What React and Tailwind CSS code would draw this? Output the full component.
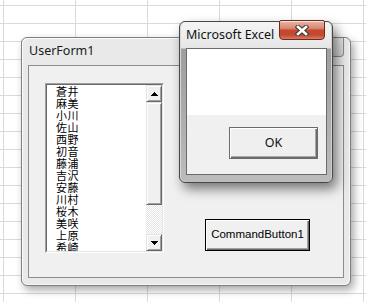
export default function App() {
  const names = ["蒼井", "麻美", "小川", "佐山", "西野", "初音", "藤浦", "吉沢", "安藤", "川村", "桜木", "美咲", "上原", "希崎"];
  const raised =
    "border border-t-[#e3e3e3] border-l-[#e3e3e3] border-b-[#696969] border-r-[#696969] shadow-[inset_1px_1px_0_#ffffff,inset_-1px_-1px_0_#a0a0a0] bg-[#f0f0f0]";
  return (
    <div className="relative w-[366px] h-[302px] overflow-hidden bg-white bg-[image:linear-gradient(to_right,#dadada_1px,transparent_1px),linear-gradient(to_bottom,#dadada_1px,transparent_1px)] bg-size-[72px_18px] bg-position-[3px_5px]">
      {/* UserForm window */}
      <div className="absolute left-[21px] top-[37px] w-[330px] h-[249px] rounded-[6px] border border-[#7f7f7f] bg-[#e9e9e9] shadow-[inset_1px_1px_0_#fbfbfb,inset_-1px_-1px_0_#f6f6f6,3px_4px_9px_rgba(0,0,0,0.35)] flex flex-col">
        <div className="h-[27px] shrink-0 flex items-center pl-[7px] text-[12.5px] text-[#1a1a1a] font-['Noto_Sans',sans-serif]">
          UserForm1
        </div>
        <div className="mx-[6px] h-[213px] border border-[#8c8c8c] bg-[#f0f0f0] flex items-start pl-[16px] pt-[17px]">
          {/* ListBox */}
          <div className="w-[119px] h-[170px] shrink-0 border border-t-[#a0a0a0] border-l-[#a0a0a0] border-b-white border-r-white">
            <div className="h-full border border-t-[#696969] border-l-[#696969] border-b-[#e3e3e3] border-r-[#e3e3e3] bg-white flex">
              <div className="flex-1 overflow-hidden pl-[9px] font-['Noto_Sans_CJK_JP',sans-serif] text-[11px] leading-[12px] text-black">
                {names.map((n) => (
                  <div key={n} className="h-[12px] tracking-[0.5px]">{n}</div>
                ))}
              </div>
              <div className="w-[16px] shrink-0 flex flex-col">
                <div className={`h-[17px] shrink-0 flex items-center justify-center ${raised}`}>
                  <svg width="7" height="4" shapeRendering="crispEdges">
                    <polygon points="0,4 7,4 3.5,0" fill="#000" />
                  </svg>
                </div>
                <div className={`h-[103px] shrink-0 ${raised}`} />
                <div className="flex-1 bg-[image:repeating-conic-gradient(#ffffff_0_25%,#e4e4e4_0_50%)] bg-size-[2px_2px]" />
                <div className={`h-[17px] shrink-0 flex items-center justify-center ${raised}`}>
                  <svg width="7" height="4" shapeRendering="crispEdges">
                    <polygon points="0,0 7,0 3.5,4" fill="#000" />
                  </svg>
                </div>
              </div>
            </div>
          </div>
          {/* CommandButton1 */}
          <div className="ml-[41px] mt-[136px] w-[105px] h-[32px] shrink-0 border border-black bg-[#f0f0f0] shadow-[inset_1px_1px_0_#ffffff,inset_-1px_-1px_0_#696969,inset_-2px_-2px_0_#a0a0a0] flex items-center justify-center font-['Liberation_Sans',sans-serif] text-[11.5px] text-black">
            CommandButton1
          </div>
        </div>
        {/* inactive close button (mostly hidden) */}
        <div className="absolute right-[6px] top-0 w-[44px] h-[19px] rounded-b-[4px] border border-t-0 border-[#8a8a8a] bg-[linear-gradient(to_bottom,#e6e6e6,#d2d2d2)]" />
      </div>

      {/* Microsoft Excel message box */}
      <div className="absolute left-[179px] top-[21px] w-[154px] h-[162px] rounded-[6px] border border-[#474747] bg-[linear-gradient(to_bottom,#f4f4f4_0px,#e6e6e6_26px,#9f9f9f_27px,#a5a5a5_60px,#bcbcbc_100%)] shadow-[inset_1px_0_0_#d8d8d8,inset_-1px_0_0_#d0d0d0,4px_6px_12px_rgba(0,0,0,0.5)] flex flex-col">
        <div className="h-[26px] shrink-0 flex items-center pl-[6px] text-[12.5px] text-[#111] font-['Noto_Sans',sans-serif]">
          Microsoft Excel
        </div>
        <div className="ml-[6px] mr-[5px] h-[127px] shrink-0 border border-[#6b6b6b] flex flex-col">
          <div className="h-[66px] shrink-0 bg-white" />
          <div className="flex-1 bg-[#f0f0f0] flex justify-end items-start pt-[12px] pr-[8px]">
            <div className="w-[89px] h-[32px] border border-[#6b6b6b] bg-[#efefef] shadow-[inset_1px_1px_0_#ffffff,inset_-1px_-1px_0_#6b6b6b,inset_-2px_-2px_0_#a8a8a8] flex items-center justify-center font-['Noto_Sans',sans-serif] text-[12.5px] text-[#111]">
              OK
            </div>
          </div>
        </div>
        {/* close button */}
        <div className="absolute left-[99px] top-[-2px] w-[46px] h-[20px] rounded-b-[4px] rounded-t-[2px] border border-[#6b2c20] bg-[linear-gradient(to_bottom,#e9b4a4_0%,#d98a72_40%,#c6472e_52%,#c24a31_78%,#dc7c60_100%)] shadow-[inset_0_1px_0_rgba(255,255,255,0.6)] flex items-center justify-center">
          <svg width="14" height="11" viewBox="0 0 14 11">
            <path d="M3 2 L11 9 M11 2 L3 9" stroke="#3b3b3b" strokeWidth="4.6" strokeLinecap="square" fill="none" />
            <path d="M3 2 L11 9 M11 2 L3 9" stroke="#ffffff" strokeWidth="2.6" strokeLinecap="square" fill="none" />
          </svg>
        </div>
      </div>
    </div>
  );
}
